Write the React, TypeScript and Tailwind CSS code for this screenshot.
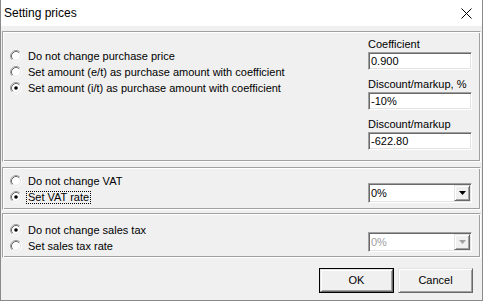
import clsx from 'clsx';

const sunken =
  'border border-t-[#a0a0a0] border-l-[#a0a0a0] border-b-white border-r-white shadow-[inset_1px_1px_0_#696969,inset_-1px_-1px_0_#e3e3e3]';
const raised =
  'border border-t-[#e3e3e3] border-l-[#e3e3e3] border-b-[#696969] border-r-[#696969] shadow-[inset_1px_1px_0_#fff,inset_-1px_-1px_0_#a0a0a0]';
const groove =
  'border border-t-[#a0a0a0] border-l-[#a0a0a0] border-b-white border-r-white shadow-[inset_1px_1px_0_#fff,inset_-1px_-1px_0_#a0a0a0]';

const Radio = ({ checked }: { checked?: boolean }) => (
  <svg width="12" height="12" viewBox="0 0 12 12" className="shrink-0">
    <circle cx="6" cy="6" r="5" fill="white" />
    <path d="M2.11 9.89 A5.5 5.5 0 0 1 9.89 2.11" fill="none" stroke="#a0a0a0" />
    <path d="M9.89 2.11 A5.5 5.5 0 0 1 2.11 9.89" fill="none" stroke="#ffffff" />
    <path d="M2.82 9.18 A4.5 4.5 0 0 1 9.18 2.82" fill="none" stroke="#696969" />
    <path d="M9.18 2.82 A4.5 4.5 0 0 1 2.82 9.18" fill="none" stroke="#e3e3e3" />
    {checked && <circle cx="6" cy="6" r="1.8" fill="black" />}
  </svg>
);

const RadioRow = ({ label, checked, focused }: { label: string; checked?: boolean; focused?: boolean }) => (
  <div className="flex h-[16px] items-center">
    <Radio checked={checked} />
    <span
      className={clsx(
        'ml-[4px] pl-[1px] pr-[1px] leading-[11px] border border-dotted',
        focused ? 'border-black' : 'border-transparent'
      )}
    >
      {label}
    </span>
  </div>
);

const Field = ({ label, value, first }: { label: string; value: string; first?: boolean }) => (
  <div className={clsx('flex flex-col', !first && 'mt-[8px]')}>
    <div className="h-[13px] leading-[13px]">{label}</div>
    <div className={clsx('mt-[1px] h-[18px] bg-white pl-[2px] leading-[16px]', sunken)}>{value}</div>
  </div>
);

const Combo = ({ value, disabled }: { value: string; disabled?: boolean }) => (
  <div className={clsx('flex h-[20px] w-[104px] items-center bg-white', sunken)}>
    <span className={clsx('flex-1 pl-[2px]', disabled ? 'text-[#a0a0a0]' : 'text-black')}>{value}</span>
    <div className={clsx('mr-[1px] flex h-[16px] w-[16px] items-center justify-center bg-[#f0f0f0]', raised)}>
      <svg width="7" height="4" viewBox="0 0 7 4">
        <path d="M0 0 H7 L3.5 4 Z" fill={disabled ? '#a0a0a0' : 'black'} />
      </svg>
    </div>
  </div>
);

const Button = ({ label, isDefault }: { label: string; isDefault?: boolean }) => (
  <div className={clsx('h-[25px] w-[75px]', isDefault ? 'border border-black' : '')}>
    <div className={clsx('flex h-full w-full items-center justify-center bg-[#f0f0f0]', raised)}>{label}</div>
  </div>
);

export default function App() {
  return (
    <div
      className="flex h-[301px] w-[483px] flex-col border-x border-b border-[#8a8a8a] text-[11px] text-black"
      style={{ fontFamily: '"Liberation Sans", Arial, sans-serif' }}
    >
      {/* title bar */}
      <div className="flex h-[26px] shrink-0 items-center justify-between bg-white pl-[3px] pr-[10px]">
        <span className="text-[12px]">Setting prices</span>
        <svg width="11" height="11" viewBox="0 0 11 11">
          <path d="M0.5 0.5 L10.5 10.5 M10.5 0.5 L0.5 10.5" stroke="black" strokeWidth="1" />
        </svg>
      </div>

      <div className="flex flex-1 flex-col bg-[#f0f0f0] px-[1px] pt-[5px]">
        {/* purchase price */}
        <div className={clsx('flex h-[131px] justify-between', groove)}>
          <div className="flex flex-col pl-[7px] pt-[16px]">
            <RadioRow label="Do not change purchase price" />
            <RadioRow label="Set amount (e/t) as purchase amount with coefficient" />
            <RadioRow label="Set amount (i/t) as purchase amount with coefficient" checked />
          </div>
          <div className="mr-[8px] flex w-[104px] flex-col pt-[6px]">
            <Field label="Coefficient" value="0.900" first />
            <Field label="Discount/markup, %" value="-10%" />
            <Field label="Discount/markup" value="-622.80" />
          </div>
        </div>

        {/* VAT */}
        <div className={clsx('mt-[5px] flex h-[43px] justify-between', groove)}>
          <div className="flex flex-col pl-[7px] pt-[5px]">
            <RadioRow label="Do not change VAT" />
            <RadioRow label="Set VAT rate" checked focused />
          </div>
          <div className="mr-[8px] pt-[15px]">
            <Combo value="0%" />
          </div>
        </div>

        {/* sales tax */}
        <div className={clsx('mt-[3px] flex h-[45px] justify-between', groove)}>
          <div className="flex flex-col pl-[7px] pt-[8px]">
            <RadioRow label="Do not change sales tax" checked />
            <RadioRow label="Set sales tax rate" />
          </div>
          <div className="mr-[8px] pt-[18px]">
            <Combo value="0%" disabled />
          </div>
        </div>

        <div className="mt-[10px] flex justify-end gap-[4px] pr-[8px]">
          <Button label="OK" isDefault />
          <Button label="Cancel" />
        </div>
      </div>
    </div>
  );
}
